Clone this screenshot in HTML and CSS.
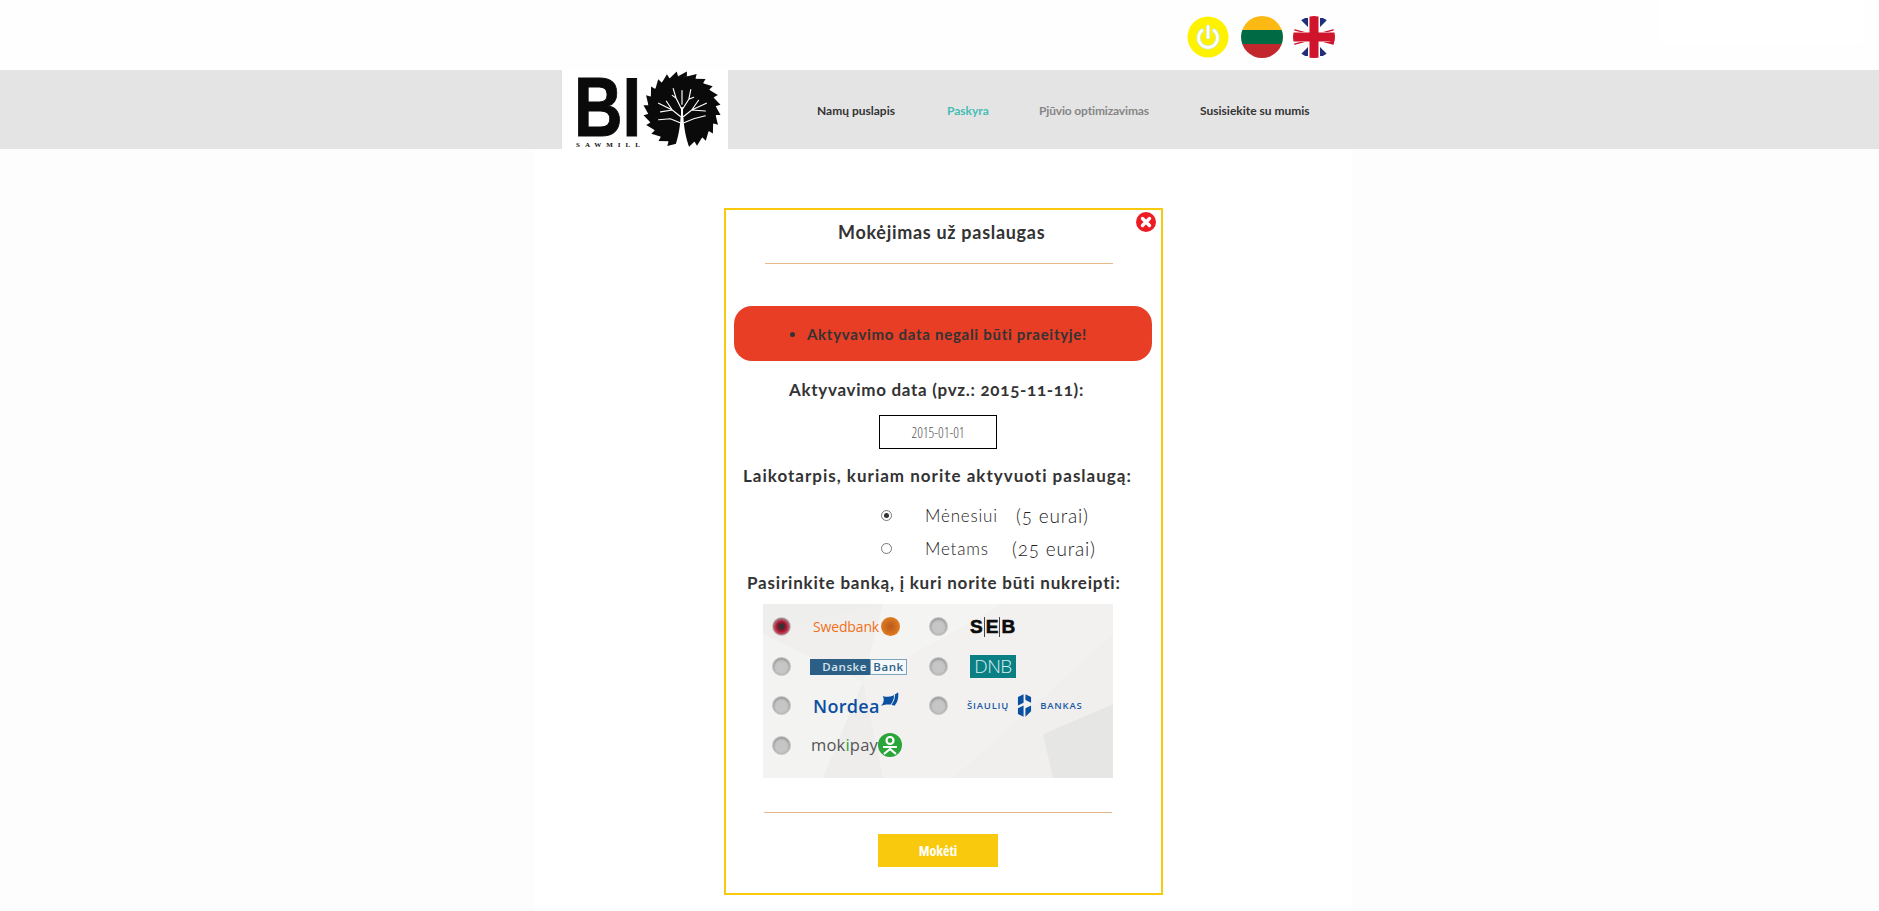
FILE: index.html
```html
<!DOCTYPE html>
<html lang="lt">
<head>
<meta charset="utf-8">
<title>Mokėjimas už paslaugas</title>
<link rel="stylesheet" href="styles.css">
</head>
<body>
<header class="top">
  <div class="top-note"></div>
  <div class="top-icons">
    <svg class="round" viewBox="0 0 42 42"><circle cx="21" cy="21" r="20.500" fill="#fff200"/><path d="M15 14.500a9.500 9.500 0 1 0 12 0" fill="none" stroke="#cfe8d8" stroke-width="4.200" stroke-linecap="round"/><path d="M21 10.500v11" stroke="#cfe8d8" stroke-width="4.200" stroke-linecap="round"/><path d="M15 14.500a9.500 9.500 0 1 0 12 0" fill="none" stroke="#fff" stroke-width="2.600" stroke-linecap="round"/><path d="M21 10.500v11" stroke="#fff" stroke-width="2.600" stroke-linecap="round"/></svg>
    <svg class="round round-mid" viewBox="0 0 42 42"><defs><clipPath id="c1"><circle cx="21" cy="21" r="21"/></clipPath></defs><g clip-path="url(#c1)"><rect width="42" height="14" fill="#fdb913"/><rect y="14" width="42" height="14" fill="#006a44"/><rect y="28" width="42" height="14" fill="#c1272d"/></g></svg>
    <svg class="round" viewBox="0 0 42 42"><defs><clipPath id="c2"><circle cx="21" cy="21" r="21"/></clipPath></defs><g clip-path="url(#c2)"><rect width="42" height="42" fill="#fff"/><path d="M6 2l9 0v9zM36 2L27 2v9zM6 40l9 0V31zM36 40L27 40V31z" fill="#1f2f7a"/><path d="M1 13l11 3h-5l-6-1.500zM41 13L30 16h5l6-1.500zM1 29l11-3h-5l-6 1.500zM41 29L30 26h5l6-1.500z" fill="#cf142b"/><rect x="16.500" width="9" height="42" fill="#cf142b"/><rect y="16.500" width="42" height="9" fill="#cf142b"/></g></svg>
  </div>
</header>

<nav class="band">
  <div class="logo">
    <div class="logo-text">
      <span class="logo-bi">BI</span>
      <span class="logo-sub">SAWMILL</span>
    </div>
    <svg class="saw" viewBox="-40 -40 80 80">
      <circle r="35" fill="#0a0a0a"/>
      <g fill="#0a0a0a">
        <path id="t" d="M-5 -34L5 -39.500L5 -34z"/>
        <use href="#t" transform="rotate(15)"/><use href="#t" transform="rotate(30)"/><use href="#t" transform="rotate(45)"/>
        <use href="#t" transform="rotate(60)"/><use href="#t" transform="rotate(75)"/><use href="#t" transform="rotate(90)"/>
        <use href="#t" transform="rotate(105)"/><use href="#t" transform="rotate(120)"/><use href="#t" transform="rotate(135)"/>
        <use href="#t" transform="rotate(150)"/><use href="#t" transform="rotate(165)"/><use href="#t" transform="rotate(180)"/>
        <use href="#t" transform="rotate(195)"/><use href="#t" transform="rotate(210)"/><use href="#t" transform="rotate(225)"/>
        <use href="#t" transform="rotate(240)"/><use href="#t" transform="rotate(255)"/><use href="#t" transform="rotate(270)"/>
        <use href="#t" transform="rotate(285)"/><use href="#t" transform="rotate(300)"/><use href="#t" transform="rotate(315)"/>
        <use href="#t" transform="rotate(330)"/><use href="#t" transform="rotate(345)"/>
      </g>
      <path d="M-8 40C-3 26 -2 16 -1.500 8L1.500 8C2 16 3 26 8 40z" fill="#fff"/>
      <g fill="none" stroke="#fff" stroke-linecap="round">
        <path stroke-width="2" d="M0 10V-2"/>
        <path stroke-width="1.200" d="M0 0L-6 -12M-6 -12L-9 -22M-6 -12L-10 -15M0 0L7 -11M7 -11L9 -21M7 -11L12 -13M0 -6L0 -20"/>
        <path stroke-width="1.200" d="M0 8L-10 0L-24 -7M-10 0L-22 2M-10 0L-16 -9"/>
        <path stroke-width="1.200" d="M0 8L10 0L25 -7M10 0L24 1M10 0L17 -10"/>
        <path stroke-width="1.100" d="M-2 13L-12 9L-24 10M2 13L12 9L24 6"/>
      </g>
    </svg>
  </div>
  <ul class="menu">
    <li><a class="menu-link" href="#">Namų puslapis</a></li>
    <li><a class="menu-link is-active" href="#">Paskyra</a></li>
    <li><a class="menu-link is-muted" href="#">Pjūvio optimizavimas</a></li>
    <li><a class="menu-link" href="#">Susisiekite su mumis</a></li>
  </ul>
</nav>

<main class="column">
  <form class="modal">
    <svg class="close" viewBox="0 0 20 20"><circle cx="10" cy="10" r="10" fill="#ed1c24"/><path d="M6.500 6.500l7 7M13.500 6.500l-7 7" stroke="#fff" stroke-width="3.400" stroke-linecap="round"/></svg>
    <h1 class="title">Mokėjimas už paslaugas</h1>
    <hr class="rule rule-top">
    <div class="alert"><ul class="alert-list"><li>Aktyvavimo data negali būti praeityje!</li></ul></div>
    <label class="field-label label-date">Aktyvavimo data (pvz.: 2015-11-11):</label>
    <input class="date" type="text" value="2015-01-01">
    <p class="field-label label-period">Laikotarpis, kuriam norite aktyvuoti paslaugą:</p>
    <div class="period">
      <span class="radio is-on"></span><span class="period-name">Mėnesiui</span><span class="period-price">(5 eurai)</span>
      <span class="radio"></span><span class="period-name">Metams</span><span class="period-price price-wide">(25 eurai)</span>
    </div>
    <p class="field-label label-bank">Pasirinkite banką, į kuri norite būti nukreipti:</p>
    <div class="banks">
      <svg class="banks-bg" viewBox="0 0 350 174" preserveAspectRatio="none">
        <path d="M0 0H120L0 30z" fill="#eeeeed"/><path d="M0 30L100 78L60 174H0z" fill="#f3f3f2"/><path d="M100 78L120 174H60z" fill="#eeedec"/><path d="M120 0H240L100 78z" fill="#f4f4f3"/><path d="M240 0H350V30L190 174H120L100 78z" fill="#f2f1f0"/><path d="M350 100V174H290L280 130z" fill="#e6e6e5"/><path d="M350 30V100L280 130L190 174z" fill="#f0efee"/>
      </svg>
      <div class="bank"><span class="knob knob-on"></span><span class="swed">Swedbank<i class="swed-ball"></i></span></div>
      <div class="bank bank-r"><span class="knob"></span><span class="seb"><span>S</span><span class="seb-part">E</span><span class="seb-part">B</span></span></div>
      <div class="bank"><span class="knob"></span><span class="danske"><b>Danske</b><em>Bank</em></span></div>
      <div class="bank bank-r"><span class="knob"></span><span class="dnb">DNB</span></div>
      <div class="bank"><span class="knob"></span><span class="nordea">Nordea<svg class="nordea-flag" viewBox="0 0 20 16"><path d="M2 4C8 6 13 5 19 0C20 6 18 12 15 15C11 13 6 13 0 15C3 12 4 8 2 4z" fill="#0a4fa0"/><path d="M11 14C14 10 15 7 15 3" stroke="#fff" fill="none"/></svg></span></div>
      <div class="bank bank-r"><span class="knob"></span><span class="siauliu">ŠIAULIŲ<svg class="siauliu-mark" viewBox="0 0 16 24"><path d="M1 3l6-3v9l-6 3zM9 0l6 3v6l-6-3zM1 15l6-3v12l-6-3zM9 15l6-3v6l-6 6z" fill="#0a4fa0"/></svg>BANKAS</span></div>
      <div class="bank"><span class="knob"></span><span class="moki">mok<u>i</u>pay<svg class="moki-mark" viewBox="0 0 24 24"><circle cx="12" cy="12" r="12" fill="#2aa53a"/><g fill="none" stroke="#fff" stroke-width="2.200"><circle cx="12" cy="7.500" r="3.500"/><path d="M5 14h14M12 14v2L6 21M12 16l6 5"/></g></svg></span></div>
    </div>
    <hr class="rule rule-bottom">
    <button class="pay" type="button">Mokėti</button>
  </form>
</main>
</body>
</html>
```
FILE: styles.css
```css
* { box-sizing: border-box; }
html, body { margin: 0; height: 911px; overflow: hidden; }
body { background: #fdfdfd; font-family: "Lato", "Open Sans", sans-serif; color: #333; }

.top { height: 70px; display: flex; padding-left: 1187px; position: relative; background: #fefefe; }
.top-icons { display: flex; gap: 11px; padding-top: 16px; }
.round { width: 42px; height: 42px; display: block; }
.round-mid { margin: 0 -1px 0 1px; }
.top-note { position: absolute; left: 1660px; top: 0; width: 203px; height: 44px; background: #fff; }

.band { height: 79px; background: #e4e4e4; display: flex; padding-left: 562px; }
.logo { width: 166px; height: 79px; background: #fff; display: flex; padding: 8px 0 0 12px; }
.logo-text { width: 70px; display: flex; flex-direction: column; }
.logo-bi { display: block; font: 700 83px/59px "Liberation Sans", sans-serif; color: #0a0a0a; -webkit-text-stroke: 1px #0a0a0a; height: 59px; transform: scaleX(.81); transform-origin: left center; }
.logo-sub { font: 700 7px/8px "Liberation Serif", serif; letter-spacing: 5px; color: #111; margin: 4px 0 0 2px; white-space: nowrap; }
.saw { width: 78px; height: 78px; margin: -7px 0 0 -1px; flex: none; }
.menu { list-style: none; margin: 0; padding: 16px 0 0 89px; display: flex; align-items: center; height: 66px; }
.menu-link { display: block; font: 700 12px/16px "Lato", sans-serif; color: #333; text-decoration: none; white-space: nowrap; }
.menu li:nth-child(1) { width: 130px; }
.menu li:nth-child(2) { width: 92px; }
.menu li:nth-child(3) { width: 161px; }
.is-active { color: #45bdb5; }
.is-muted { color: #868686; letter-spacing: -.15px; }

.column { margin-left: 534px; width: 818px; height: 762px; background: #fff; padding: 59px 0 0 190px; }
.modal { position: relative; width: 439px; height: 687px; border: 2px solid #f8c90d; display: flex; flex-direction: column; align-items: flex-start; }
.close { position: absolute; left: 410px; top: 2px; width: 20px; height: 20px; }
.title { margin: 11px 0 0 112px; font: 700 18px/22px "Lato", sans-serif; color: #333; white-space: nowrap; letter-spacing: .7px; }
.rule { border: 0; height: 1px; background: #e8b98a; margin: 0; width: 348px; }
.rule-top { margin: 20px 0 0 39px; }
.rule-bottom { margin: 34px 0 0 38px; }
.alert { margin: 42px 0 0 8px; width: 418px; height: 55px; background: #e83e26; border-radius: 18px; display: flex; align-items: center; }
.alert-list { margin: 0; padding: 0 0 0 73px; font: 700 15px/20px "Lato", sans-serif; color: #333; white-space: nowrap; letter-spacing: .72px; }
.field-label { margin: 0; font: 700 17px/20px "Lato", sans-serif; color: #333; white-space: nowrap; font-variant-numeric: oldstyle-nums; }
.label-date { margin: 19px 0 0 63px; letter-spacing: .7px; }
.date { margin: 15px 0 0 153px; width: 118px; height: 34px; border: 1px solid #000; background: #fff; text-align: center; padding: 0; font: 300 14px/20px "Open Sans", sans-serif; font-stretch: 75%; color: #555; }
.label-period { margin: 17px 0 0 17px; letter-spacing: 1px; }
.period { margin: 13px 0 0 155px; display: grid; grid-template-columns: 44px auto auto; grid-auto-rows: 33px; align-items: center; justify-content: start; }
.radio { width: 11px; height: 11px; border: 1px solid #777; border-radius: 50%; background: #fff; display: flex; align-items: center; justify-content: center; }
.radio.is-on::after { content: ""; width: 5px; height: 5px; border-radius: 50%; background: #333; }
.period-name { font: 300 17px/22px "Lato", sans-serif; color: #222; width: 91px; letter-spacing: .8px; }
.period-price { font: 300 19px/26px "Lato", sans-serif; color: #222; white-space: nowrap; letter-spacing: .8px; font-variant-numeric: oldstyle-nums; }
.price-wide { margin-left: -4px; }
.label-bank { margin: 8px 0 0 21px; letter-spacing: .8px; }

.banks { position: relative; margin: 11px 0 0 37px; width: 350px; height: 174px; background: #f0efee; display: grid; grid-template-columns: 157px 193px; grid-template-rows: repeat(4, 39.500px); padding-top: 3px; overflow: hidden; }
.banks-bg { position: absolute; inset: 0; width: 100%; height: 100%; }
.bank { position: relative; display: flex; align-items: center; padding-left: 9px; }
.knob { width: 19px; height: 19px; border-radius: 50%; border: 1px solid #c4c4c4; background: radial-gradient(circle at 50% 55%, #c6c6c6 0 50%, #a4a4a4 100%); box-shadow: inset 0 1px 3px #8a8a8a; flex: none; }
.knob-on { background: radial-gradient(circle, #333 0 18%, #a8102a 38%, #e9a0a8 100%); }
.swed { margin-left: 22px; display: flex; align-items: center; font: 400 14px/20px "Open Sans", sans-serif; color: #f0701a; letter-spacing: -.15px; }
.swed-ball { width: 19px; height: 19px; margin-left: 2px; border-radius: 50%; background: radial-gradient(circle, #b8591a, #f08a24); }
.danske { margin: 1px 0 0 19px; display: flex; height: 16px; font: 600 11.500px/14px "Open Sans", sans-serif; letter-spacing: .6px; }
.danske b { width: 60px; background: #2c5f86; color: #d4e2ea; font-weight: 600; text-align: right; padding: 1px 3px 0 0; }
.danske em { width: 37px; font-style: normal; color: #2c5f86; background: #f4f8fa; border: 1px solid #7fa5bd; text-align: center; }
.seb { margin-left: 22px; display: flex; font: 700 19px/20px "Liberation Sans", sans-serif; color: #0c0c0c; -webkit-text-stroke: .6px #0c0c0c; }
.seb-part { border-left: 1px solid #444; padding-left: 1px; margin-left: 1px; }
.dnb { margin-left: 22px; width: 46px; height: 23px; background: #0a8085; color: #d8eeee; font: 300 19px/23px "Open Sans", sans-serif; text-align: center; letter-spacing: -.5px; }
.nordea { margin-left: 22px; display: flex; align-items: flex-start; font: 600 18px/22px "Open Sans", sans-serif; color: #0a4fa0; letter-spacing: .3px; }
.nordea-flag { width: 18px; height: 15px; margin: -3px 0 0 1px; }
.siauliu { margin-left: 19px; display: flex; align-items: center; font: 600 9.500px/20px "Open Sans", sans-serif; letter-spacing: .8px; color: #1d5aa5; white-space: nowrap; }
.siauliu-mark { width: 15px; height: 23px; margin: 0 8px; }
.moki { margin-left: 20px; display: flex; align-items: center; font: 400 16.500px/24px "Open Sans", sans-serif; color: #555; letter-spacing: .2px; }
.moki u { text-decoration: none; color: #2aa53a; }
.moki-mark { width: 24px; height: 24px; margin-left: 0; }

.pay { margin: 21px 0 0 152px; width: 120px; height: 33px; border: 0; background: #f8c90d; color: #fff; font: 700 14px/33px "Open Sans", sans-serif; font-stretch: 75%; padding: 0; }
```
